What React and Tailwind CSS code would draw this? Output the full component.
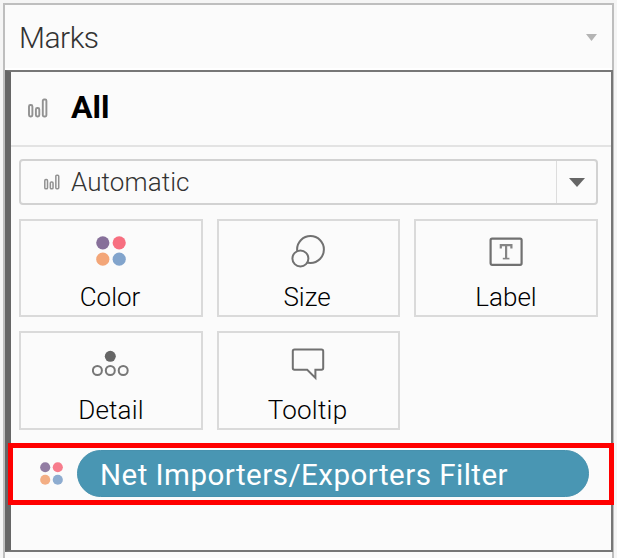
function BarsIcon({ className }) {
  return (
    <svg className={className} viewBox="0 0 20 20" fill="none" stroke="#929292" strokeWidth="1.9">
      <rect x="1" y="7" width="3.4" height="11.5" rx="1.4" />
      <rect x="7.9" y="10" width="3.4" height="8.5" rx="1.4" />
      <rect x="14.8" y="1.5" width="3.6" height="17" rx="1.2" />
    </svg>
  );
}

function ColorIcon({ className }) {
  return (
    <svg className={className} viewBox="0 0 30 30">
      <circle cx="6.8" cy="6.8" r="6.6" fill="#87709a" />
      <circle cx="23.2" cy="6.8" r="6.6" fill="#f76f80" />
      <circle cx="6.8" cy="23.2" r="6.6" fill="#f3a678" />
      <circle cx="23.2" cy="23.2" r="6.6" fill="#82a4cc" />
    </svg>
  );
}

function SizeIcon() {
  return (
    <svg className="h-9 w-9" viewBox="0 0 36 36" fill="none" stroke="#717171" strokeWidth="2">
      <circle cx="19.5" cy="16.5" r="13.4" />
      <circle cx="9.4" cy="25.5" r="8" fill="#fbfbfb" />
    </svg>
  );
}

function LabelIcon() {
  return (
    <svg className="h-9 w-9" viewBox="0 0 36 36" fill="none" stroke="#717171">
      <rect x="2.6" y="5.6" width="31" height="26.2" rx="1.5" strokeWidth="2.2" />
      <path d="M12.8 15.6V12.2H23.4V15.6M18.1 12.2V25.6" strokeWidth="2.2" stroke="#858585" />
      <path d="M14.8 25.6H21.4" strokeWidth="1.6" stroke="#858585" />
    </svg>
  );
}

function DetailIcon() {
  return (
    <svg className="h-9 w-[38px]" viewBox="0 0 38 36" fill="none" stroke="#777" strokeWidth="2">
      <circle cx="18.3" cy="11.3" r="5.5" fill="#666" stroke="none" />
      <circle cx="5.4" cy="25.5" r="4.5" />
      <circle cx="18.3" cy="25.5" r="4.5" />
      <circle cx="31.2" cy="25.5" r="4.5" />
    </svg>
  );
}

function TooltipIcon() {
  return (
    <svg className="h-9 w-9" viewBox="0 0 36 36" fill="none" stroke="#717171" strokeWidth="2">
      <path d="M3.5 4.5H30.5Q32.2 4.5 32.2 6.2V23.1Q32.2 24.8 30.5 24.8H24.4V32.9L16.2 24.8H3.5Q1.8 24.8 1.8 23.1V6.2Q1.8 4.5 3.5 4.5Z" />
    </svg>
  );
}

function MarkButton({ icon, label, className = "mt-3" }) {
  return (
    <button className="flex flex-col items-center border-2 border-[#dadada] pt-3">
      <span className="flex h-9 items-center justify-center">{icon}</span>
      <span className={`whitespace-nowrap text-[26px] leading-8 font-light text-black ${className}`}>{label}</span>
    </button>
  );
}

export default function App() {
  return (
    <div className="relative h-[558px] w-[617px] overflow-hidden bg-[#f5f5f5] pt-[3px] pl-[3px] font-[Roboto,sans-serif]">
      <div className="h-[555px] w-[611px] border-2 border-b-0 border-[#bebebe] bg-[#fbfbfb]">
        <header className="flex h-[65px] items-center justify-between border-b-2 border-white pt-0.5 pr-[15px] pl-[14px]">
          <h1 className="text-[30px] leading-9 font-light tracking-[-0.5px] text-[#333]">Marks</h1>
          <svg className="h-[7px] w-[11px]" viewBox="0 0 11 7" fill="#b4b4b4">
            <path d="M0 0H11L5.5 7Z" />
          </svg>
        </header>
        <section className="h-[482px] w-[608px] border-2 border-l-[6px] border-[#777] border-l-[#666]">
          <div className="flex h-[75px] items-center border-b-2 border-[#e3e3e3] pb-0.5 pl-[17px]">
            <BarsIcon className="h-5 w-5" />
            <h2 className="ml-[23px] pb-0.5 text-[32px] leading-9 font-bold text-black">All</h2>
          </div>
          <div className="pt-3 pr-[13px] pl-2">
            <div className="flex h-[46px] items-center rounded-[4px] border-2 border-[#d2d2d2]">
              <BarsIcon className="ml-[23px] h-4 w-4" />
              <span className="ml-[11px] flex-1 text-[26px] leading-8 font-light tracking-[0.1px] text-[#333]">Automatic</span>
              <span className="flex h-full w-[40px] items-center justify-center border-l border-[#ddd]">
                <svg className="h-[9px] w-[16px]" viewBox="0 0 16 9" fill="#666">
                  <path d="M0 0H16L8 9Z" />
                </svg>
              </span>
            </div>
            <div className="mt-[14px] grid grid-cols-[184px_183px_184px] grid-rows-[98px_99px] gap-[14px]">
              <MarkButton icon={<ColorIcon className="h-[30px] w-[30px]" />} label="Color" className="mt-3 pr-0.5" />
              <MarkButton icon={<SizeIcon />} label="Size" className="mt-3 pr-[3px]" />
              <MarkButton icon={<LabelIcon />} label="Label" />
              <MarkButton icon={<DetailIcon />} label="Detail" className="mt-[13px] tracking-[0.2px]" />
              <MarkButton icon={<TooltipIcon />} label="Tooltip" className="mt-[13px] pr-0.5 tracking-[0.25px]" />
            </div>
          </div>
          <div className="mt-5 flex h-[47px] items-center pl-[29px]">
            <ColorIcon className="h-[23px] w-[23px] opacity-90" />
            <div className="ml-[14px] flex h-[47px] w-[512px] items-center rounded-full border border-[#4791ae] bg-[#4996b3] pt-0.5 pl-[22px]">
              <span className="whitespace-nowrap text-[29.5px] leading-9 tracking-[0.48px] text-white">Net Importers/Exporters Filter</span>
            </div>
          </div>
        </section>
      </div>
      <div className="absolute top-[443px] left-[8px] h-[62px] w-[606px] border-[5px] border-[#ff0000]" />
    </div>
  );
}
